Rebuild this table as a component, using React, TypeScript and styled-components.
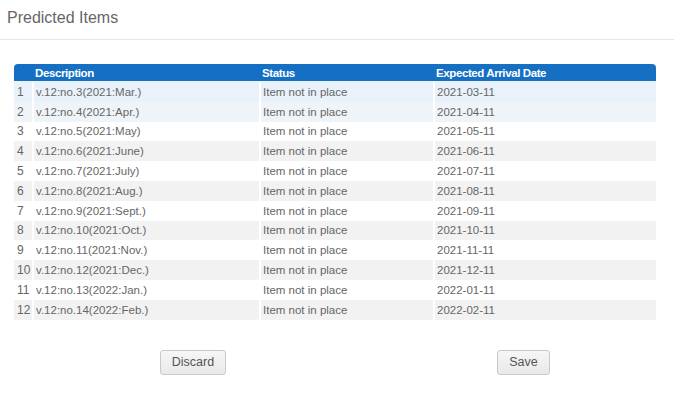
import React from "react";
import styled, { createGlobalStyle } from "styled-components";

const GlobalStyle = createGlobalStyle`
  html, body {
    margin: 0;
    padding: 0;
    background: #ffffff;
    font-family: "Liberation Sans", Arial, sans-serif;
  }
`;

const Page = styled.div`
  width: 674px;
  height: 393px;
  overflow: hidden;
  background: #fff;
`;

const TitleBar = styled.div`
  height: 39px;
  border-bottom: 1px solid #e6e6e6;
  padding: 0 0 0 7px;
  display: flex;
  align-items: center;
  box-sizing: content-box;
`;

const Title = styled.h1`
  margin: 0 0 3px 0;
  font-size: 16px;
  font-weight: normal;
  color: #666;
`;

const Grid = styled.div`
  margin: 24px 0 0 14px;
  width: 642px;
`;

const cols = "18px 225px 172px 221px";

const HeadRow = styled.div`
  display: grid;
  grid-template-columns: ${cols};
  column-gap: 2px;
  height: 17px;
  align-items: center;
  background: #1570c4;
  border-radius: 4px 4px 0 0;
  border-bottom: 1px solid #e8f0f8;
`;

const HeadCell = styled.div`
  color: #fff;
  font-size: 11.5px;
  font-weight: bold;
  letter-spacing: -0.4px;
  padding-left: 1px;
`;

const Row = styled.div`
  display: grid;
  grid-template-columns: ${cols};
  column-gap: 2px;
  height: 19.8px;
`;

const Cell = styled.div<{ $bg: string }>`
  background: ${(p) => p.$bg};
  display: flex;
  align-items: center;
  padding-left: 2px;
  font-size: 11.5px;
  color: #666;
  white-space: nowrap;
`;

const NumCell = styled(Cell)`
  padding-left: 3px;
  font-size: 12px;
`;

const Actions = styled.div`
  display: grid;
  grid-template-columns: 330px 330px;
  margin-top: 30px;
`;

const ButtonSlot = styled.div<{ $x: number }>`
  padding-left: ${(p) => p.$x}px;
`;

const Button = styled.button<{ $w: number }>`
  width: ${(p) => p.$w}px;
  height: 25px;
  border: 1px solid #c9c9c9;
  border-radius: 3px;
  background: linear-gradient(#f6f6f6, #e9e9e9);
  color: #555;
  font-family: "Liberation Sans", Arial, sans-serif;
  font-size: 12.5px;
  padding: 0;
`;

const months = [
  ["3", "2021:Mar.", "2021-03-11"],
  ["4", "2021:Apr.", "2021-04-11"],
  ["5", "2021:May", "2021-05-11"],
  ["6", "2021:June", "2021-06-11"],
  ["7", "2021:July", "2021-07-11"],
  ["8", "2021:Aug.", "2021-08-11"],
  ["9", "2021:Sept.", "2021-09-11"],
  ["10", "2021:Oct.", "2021-10-11"],
  ["11", "2021:Nov.", "2021-11-11"],
  ["12", "2021:Dec.", "2021-12-11"],
  ["13", "2022:Jan.", "2022-01-11"],
  ["14", "2022:Feb.", "2022-02-11"],
];

function rowBg(i: number) {
  if (i === 0) return "#e9f2fa";
  if (i === 1) return "#eff4f8";
  return i % 2 === 1 ? "#f2f2f2" : "#ffffff";
}

export default function App() {
  return (
    <>
      <GlobalStyle />
      <Page>
        <TitleBar>
          <Title>Predicted Items</Title>
        </TitleBar>

        <Grid>
          <HeadRow>
            <HeadCell />
            <HeadCell>Description</HeadCell>
            <HeadCell>Status</HeadCell>
            <HeadCell>Expected Arrival Date</HeadCell>
          </HeadRow>
          {months.map(([no, label, date], i) => {
            const bg = rowBg(i);
            return (
              <Row key={no}>
                <NumCell $bg={bg}>{i + 1}</NumCell>
                <Cell $bg={bg}>{`v.12:no.${no}(${label})`}</Cell>
                <Cell $bg={bg}>Item not in place</Cell>
                <Cell $bg={bg}>{date}</Cell>
              </Row>
            );
          })}
        </Grid>

        <Actions>
          <ButtonSlot $x={160}>
            <Button $w={66}>Discard</Button>
          </ButtonSlot>
          <ButtonSlot $x={167}>
            <Button $w={53}>Save</Button>
          </ButtonSlot>
        </Actions>
      </Page>
    </>
  );
}
